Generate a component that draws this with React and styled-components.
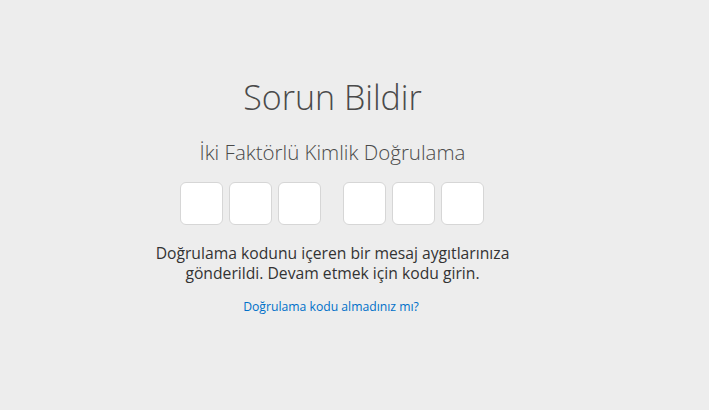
import React from 'react';
import styled, { createGlobalStyle } from 'styled-components';

const GlobalStyle = createGlobalStyle`
  html, body {
    margin: 0;
    padding: 0;
    background: #ededed;
  }
  body {
    font-family: "Open Sans", "Noto Sans", sans-serif;
  }
`;

const Page = styled.main`
  width: 100%;
  height: 410px;
  display: flex;
  justify-content: center;
  box-sizing: border-box;
  padding-right: 44px;
`;

const Content = styled.section`
  display: flex;
  flex-direction: column;
  align-items: center;
  padding-top: 75px;
`;

const Title = styled.h1`
  margin: 0;
  font-size: 34px;
  font-weight: 300;
  color: #4a4a4a;
  line-height: 44px;
`;

const Subtitle = styled.h2`
  margin: 19px 0 0;
  font-size: 20.5px;
  font-weight: 300;
  color: #4a4a4a;
  line-height: 28px;
`;

const CodeRow = styled.div`
  display: flex;
  gap: 22px;
  margin-top: 16px;
`;

const CodeGroup = styled.div`
  display: flex;
  gap: 6px;
`;

const CodeBox = styled.input`
  width: 43px;
  height: 43px;
  box-sizing: border-box;
  border: 1px solid #d6d6d6;
  border-radius: 6px;
  background: #fff;
  padding: 0;
  outline: none;
  text-align: center;
  font-size: 20px;
`;

const Message = styled.p`
  margin: 18px 0 0;
  font-size: 15.7px;
  line-height: 20px;
  color: #333;
  text-align: center;
`;

const HelpLink = styled.a`
  margin-top: 15px;
  margin-right: 3px;
  font-size: 12.2px;
  color: #0070c9;
  text-decoration: none;
`;

export default function App() {
  return (
    <>
      <GlobalStyle />
      <Page>
        <Content>
          <Title>Sorun Bildir</Title>
          <Subtitle>İki Faktörlü Kimlik Doğrulama</Subtitle>
          <CodeRow>
            <CodeGroup>
              <CodeBox maxLength={1} />
              <CodeBox maxLength={1} />
              <CodeBox maxLength={1} />
            </CodeGroup>
            <CodeGroup>
              <CodeBox maxLength={1} />
              <CodeBox maxLength={1} />
              <CodeBox maxLength={1} />
            </CodeGroup>
          </CodeRow>
          <Message>
            Doğrulama kodunu içeren bir mesaj aygıtlarınıza
            <br />
            gönderildi. Devam etmek için kodu girin.
          </Message>
          <HelpLink href="#">Doğrulama kodu almadınız mı?</HelpLink>
        </Content>
      </Page>
    </>
  );
}
